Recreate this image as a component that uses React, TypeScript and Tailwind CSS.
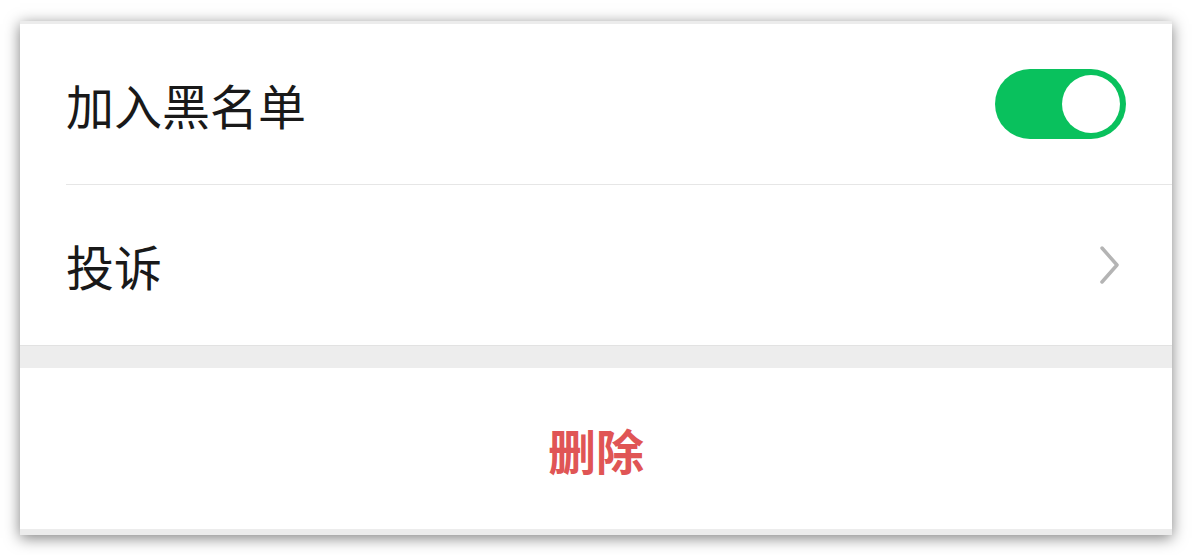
import { useState } from "react";

const FONT = { fontFamily: '"Noto Sans CJK SC", "Noto Sans", sans-serif' };

const Chevron = () => (
    <svg width="22" height="40" viewBox="0 0 22 40" fill="none" aria-hidden>
        <path
            d="M3 3 L18 20 L3 37"
            stroke="#b4b4b4"
            strokeWidth="3.5"
            strokeLinecap="round"
            strokeLinejoin="round"
        />
    </svg>
);

const Toggle = ({ on, onChange }: { on: boolean; onChange: () => void }) => (
    <button
        type="button"
        onClick={onChange}
        className={`flex h-[70px] w-[131px] items-center rounded-full p-[6px] ${on ? "justify-end bg-[#09c15d]" : "justify-start bg-[#e5e5e5]"}`}
        aria-pressed={on}
    >
        <span className="h-[58px] w-[58px] rounded-full bg-white" />
    </button>
);

export default function App() {
    const [blocked, setBlocked] = useState(true);

    return (
        <div className="h-[555px] w-full bg-white pt-[21px] px-[20px]" style={FONT}>
            <div className="flex h-[514px] flex-col bg-white shadow-[0_3px_14px_rgba(0,0,0,0.5)]">
                {/* top edge */}
                <div className="h-[3px] bg-[#ececec]" />

                {/* blacklist row */}
                <div className="flex h-[160px] items-center justify-between pl-[46px] pr-[46px]">
                    <span className="text-[48px] leading-none text-[#191919]">加入黑名单</span>
                    <Toggle on={blocked} onChange={() => setBlocked(!blocked)} />
                </div>
                <div className="ml-[46px] h-px bg-[#e6e6e6]" />

                {/* complaint row */}
                <div className="flex h-[160px] items-center justify-between pl-[46px] pr-[51px]">
                    <span className="text-[48px] leading-none text-[#191919]">投诉</span>
                    <Chevron />
                </div>

                {/* section gap */}
                <div className="h-[23px] border-t border-[#e2e2e2] bg-[#ededed]" />

                {/* delete */}
                <div className="flex h-[161px] items-center justify-center">
                    <span className="text-[48px] font-semibold leading-none text-[#e05555]">删除</span>
                </div>
                <div className="h-[6px] bg-[#ececec]" />
            </div>
        </div>
    );
}
